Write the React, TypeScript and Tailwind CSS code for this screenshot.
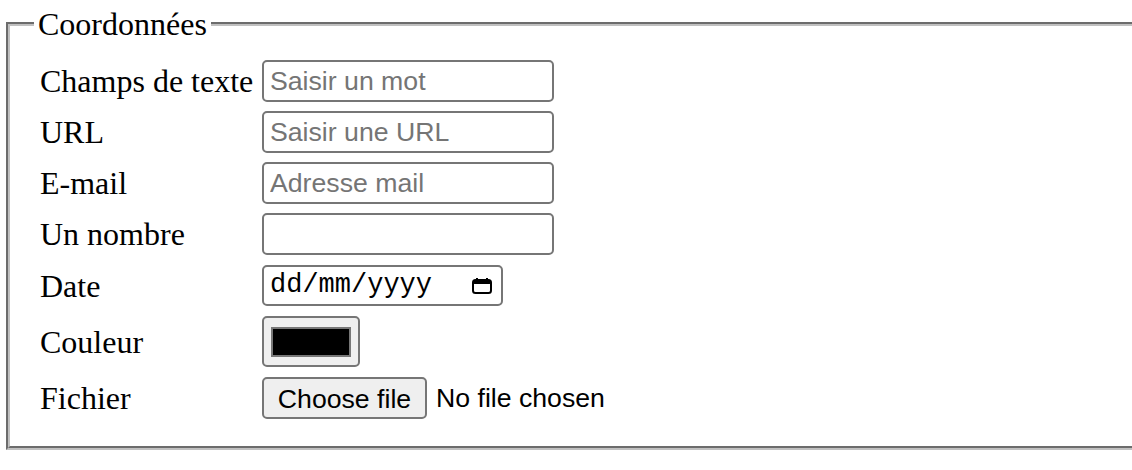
const rows = [
  { label: "Champs de texte", placeholder: "Saisir un mot", type: "text" },
  { label: "URL", placeholder: "Saisir une URL", type: "url" },
  { label: "E-mail", placeholder: "Adresse mail", type: "email" },
  { label: "Un nombre", placeholder: "", type: "text" },
];

function CalendarIcon() {
  return (
    <svg width="20" height="16" viewBox="0 0 20 16" className="block">
      <rect x="4" y="0" width="2" height="3" fill="#000" />
      <rect x="14" y="0" width="2" height="3" fill="#000" />
      <rect x="1" y="2" width="18" height="13" rx="2.5" fill="none" stroke="#000" strokeWidth="2" />
      <rect x="1" y="2" width="18" height="4" rx="1.5" fill="#000" />
    </svg>
  );
}

export default function App() {
  return (
    <div className="h-[470px] w-[1132px] overflow-hidden bg-white font-['Liberation_Serif',serif] text-black">
      <fieldset className="ml-[6px] mt-[6px] w-[1170px] border-4 border-[#c0c0c0] px-6 pb-[27px] pt-[18px] [border-style:groove]">
        <legend className="px-1 text-[32px] leading-[36px]">Coordonnées</legend>

        <div className="flex flex-col gap-[9px] pl-[6px]">
          {rows.map((r) => (
            <div key={r.label} className="flex h-[42px] items-center">
              <label className="w-[222px] text-[32px] leading-[36px]">{r.label}</label>
              <input
                type={r.type}
                placeholder={r.placeholder}
                className="h-[42px] w-[292px] rounded-[5px] border-2 border-[#767676] bg-white px-[6px] font-['Liberation_Sans',Arial,sans-serif] text-[26.67px] text-black outline-none placeholder:text-[#757575]"
              />
            </div>
          ))}
        </div>

        <div className="mt-[10px] flex h-[41px] items-center pl-[6px]">
          <label className="w-[222px] text-[32px] leading-[36px]">Date</label>
          <div className="flex h-[41px] w-[241px] items-center justify-between rounded-[5px] border-2 border-[#767676] bg-white pl-[6px] pr-[9px] font-['Liberation_Mono',monospace] text-[27px]">
            <span>dd/mm/yyyy</span>
            <CalendarIcon />
          </div>
        </div>

        <div className="mt-[10px] flex h-[51px] items-center pl-[6px]">
          <label className="w-[222px] text-[32px] leading-[36px]">Couleur</label>
          <button
            type="button"
            className="flex h-[51px] w-[98px] items-center justify-center rounded-[5px] border-2 border-[#767676] bg-[#efefef]"
          >
            <span className="block h-[30px] w-[80px] border-2 border-[#777777] bg-black" />
          </button>
        </div>

        <div className="mt-[10px] flex h-[42px] items-center pl-[6px]">
          <label className="w-[222px] text-[32px] leading-[36px]">Fichier</label>
          <div className="flex items-center gap-[9px] font-['Liberation_Sans',Arial,sans-serif] text-[26.67px]">
            <button
              type="button"
              className="h-[42px] w-[165px] rounded-[5px] border-2 border-[#767676] bg-[#efefef] text-center text-black"
            >
              Choose file
            </button>
            <span>No file chosen</span>
          </div>
        </div>
      </fieldset>
    </div>
  );
}
